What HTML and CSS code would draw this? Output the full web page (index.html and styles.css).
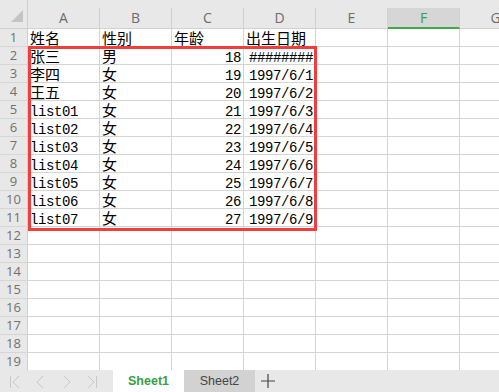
FILE: index.html
```html
<!DOCTYPE html>
<html>
<head>
<meta charset="utf-8">
<title>Sheet1</title>
<link rel="stylesheet" href="styles.css">
</head>
<body>
<div id="book">
	<div class="sheet">
		<div class="row head">
			<div class="corner"><svg width="12" height="12" viewBox="0 0 12 12"><polygon points="12,0 12,12 0,12" fill="#c4c4c4"/></svg></div>
			<div class="col"><span>A</span></div>
			<div class="col"><span>B</span></div>
			<div class="col"><span>C</span></div>
			<div class="col"><span>D</span></div>
			<div class="col"><span>E</span></div>
			<div class="col active"><span>F</span></div>
			<div class="col"><span>G</span></div>
		</div>
		<div class="row"><div class="num">1</div><div class="c">姓名</div><div class="c">性别</div><div class="c">年龄</div><div class="c">出生日期</div><div class="c"></div><div class="c"></div><div class="c"></div></div>
		<div class="row"><div class="num">2</div><div class="c">张三</div><div class="c">男</div><div class="c m r">18</div><div class="c m r">########</div><div class="c"></div><div class="c"></div><div class="c"></div></div>
		<div class="row"><div class="num">3</div><div class="c">李四</div><div class="c">女</div><div class="c m r">19</div><div class="c m r">1997/6/1</div><div class="c"></div><div class="c"></div><div class="c"></div></div>
		<div class="row"><div class="num">4</div><div class="c">王五</div><div class="c">女</div><div class="c m r">20</div><div class="c m r">1997/6/2</div><div class="c"></div><div class="c"></div><div class="c"></div></div>
		<div class="row"><div class="num">5</div><div class="c m">list01</div><div class="c">女</div><div class="c m r">21</div><div class="c m r">1997/6/3</div><div class="c"></div><div class="c"></div><div class="c"></div></div>
		<div class="row"><div class="num">6</div><div class="c m">list02</div><div class="c">女</div><div class="c m r">22</div><div class="c m r">1997/6/4</div><div class="c"></div><div class="c"></div><div class="c"></div></div>
		<div class="row"><div class="num">7</div><div class="c m">list03</div><div class="c">女</div><div class="c m r">23</div><div class="c m r">1997/6/5</div><div class="c"></div><div class="c"></div><div class="c"></div></div>
		<div class="row"><div class="num">8</div><div class="c m">list04</div><div class="c">女</div><div class="c m r">24</div><div class="c m r">1997/6/6</div><div class="c"></div><div class="c"></div><div class="c"></div></div>
		<div class="row"><div class="num">9</div><div class="c m">list05</div><div class="c">女</div><div class="c m r">25</div><div class="c m r">1997/6/7</div><div class="c"></div><div class="c"></div><div class="c"></div></div>
		<div class="row"><div class="num">10</div><div class="c m">list06</div><div class="c">女</div><div class="c m r">26</div><div class="c m r">1997/6/8</div><div class="c"></div><div class="c"></div><div class="c"></div></div>
		<div class="row"><div class="num">11</div><div class="c m">list07</div><div class="c">女</div><div class="c m r">27</div><div class="c m r">1997/6/9</div><div class="c"></div><div class="c"></div><div class="c"></div></div>
		<div class="row"><div class="num">12</div><div class="c"></div><div class="c"></div><div class="c"></div><div class="c"></div><div class="c"></div><div class="c"></div><div class="c"></div></div>
		<div class="row"><div class="num">13</div><div class="c"></div><div class="c"></div><div class="c"></div><div class="c"></div><div class="c"></div><div class="c"></div><div class="c"></div></div>
		<div class="row"><div class="num">14</div><div class="c"></div><div class="c"></div><div class="c"></div><div class="c"></div><div class="c"></div><div class="c"></div><div class="c"></div></div>
		<div class="row"><div class="num">15</div><div class="c"></div><div class="c"></div><div class="c"></div><div class="c"></div><div class="c"></div><div class="c"></div><div class="c"></div></div>
		<div class="row"><div class="num">16</div><div class="c"></div><div class="c"></div><div class="c"></div><div class="c"></div><div class="c"></div><div class="c"></div><div class="c"></div></div>
		<div class="row"><div class="num">17</div><div class="c"></div><div class="c"></div><div class="c"></div><div class="c"></div><div class="c"></div><div class="c"></div><div class="c"></div></div>
		<div class="row"><div class="num">18</div><div class="c"></div><div class="c"></div><div class="c"></div><div class="c"></div><div class="c"></div><div class="c"></div><div class="c"></div></div>
		<div class="row"><div class="num">19</div><div class="c"></div><div class="c"></div><div class="c"></div><div class="c"></div><div class="c"></div><div class="c"></div><div class="c"></div></div>
		<!-- selection frame around A2:D11 -->
		<div class="frame"></div>
	</div>
	<div class="tabs">
		<div class="nav">
			<svg width="114" height="22" viewBox="0 0 114 22">
				<g fill="none" stroke="#c9c9c9" stroke-width="1">
					<path d="M10.5 6v12M19 6l-6 6 6 6"/>
					<path d="M43 6l-6 6 6 6"/>
					<path d="M64 6l6 6-6 6"/>
					<path d="M88 6l6 6-6 6M96.5 6v12"/>
				</g>
			</svg>
		</div>
		<div class="tab on">Sheet1</div>
		<div class="tab">Sheet2</div>
		<div class="add"><svg width="14" height="14" viewBox="0 0 14 14"><path d="M7 0v14M0 7h14" stroke="#444" stroke-width="1.2"/></svg></div>
	</div>
</div>
</body>
</html>
```

FILE: styles.css
```css
html, body {
	margin: 0;
	padding: 0;
	background: #fff;
}
#book {
	width: 499px;
	height: 392px;
	overflow: hidden;
	display: flex;
	flex-direction: column;
}
.sheet {
	position: relative;
	height: 370px;
	overflow: hidden;
}
.row {
	display: grid;
	grid-template-columns: 28px repeat(7, 72px);
	height: 18px;
}
.row > div {
	box-sizing: border-box;
	height: 18px;
	white-space: nowrap;
}
.row.head {
	height: 29px;
	background: #e8e8e8;
}
.row.head > div {
	height: 29px;
}
.corner {
	display: flex;
	align-items: center;
	justify-content: center;
	padding: 3px 0 0 6px;
	border-right: 1px solid #d0d0d0;
	border-bottom: 1px solid #d0d0d0;
}
.col {
	padding-top: 8px;
	border-bottom: 1px solid #d0d0d0;
}
.col span {
	display: block;
	height: 20px;
	line-height: 21px;
	text-align: center;
	border-right: 1px solid #d0d0d0;
	font: 14px "Open Sans", sans-serif;
	color: #6c6c6c;
}
.col.active span {
	background: #d6d6d6;
	border-bottom: 2px solid #3ea84a;
	height: 21px;
	margin-bottom: -1px;
	box-sizing: border-box;
	color: #3a9e46;
}
.num {
	background: #e8e8e8;
	border-right: 1px solid #d0d0d0;
	border-bottom: 1px solid #d6d6d6;
	text-align: center;
	font: 13px/17px "Open Sans", sans-serif;
	color: #707070;
}
.c {
	border-right: 1px solid #d4d4d4;
	border-bottom: 1px solid #d4d4d4;
	padding: 1px 2px 0;
	font: 15px/16px "Noto Sans CJK SC", sans-serif;
	color: #000;
}
/* latin text and figures sit on the same baseline as the hanzi */
.c.m {
	padding-top: 6px;
	font: 14px/11px "Liberation Mono", monospace;
	letter-spacing: -0.4px;
}
.c.r {
	text-align: right;
	padding-right: 2px;
}
.frame {
	position: absolute;
	left: 28px;
	top: 46px;
	width: 289px;
	height: 185px;
	box-sizing: border-box;
	border: 3px solid #f23d3d;
}
.tabs {
	display: flex;
	height: 22px;
	background: #e8e8e8;
}
.nav {
	width: 113px;
	height: 22px;
}
.tab {
	width: 71px;
	height: 22px;
	text-align: center;
	font: 12.5px/22px "Liberation Sans", sans-serif;
	color: #444;
	background: #d2d2d2;
}
.tab.on {
	background: #fff;
	color: #3a9e46;
	font-weight: bold;
}
.add {
	display: flex;
	align-items: center;
	padding-left: 6px;
}
```
